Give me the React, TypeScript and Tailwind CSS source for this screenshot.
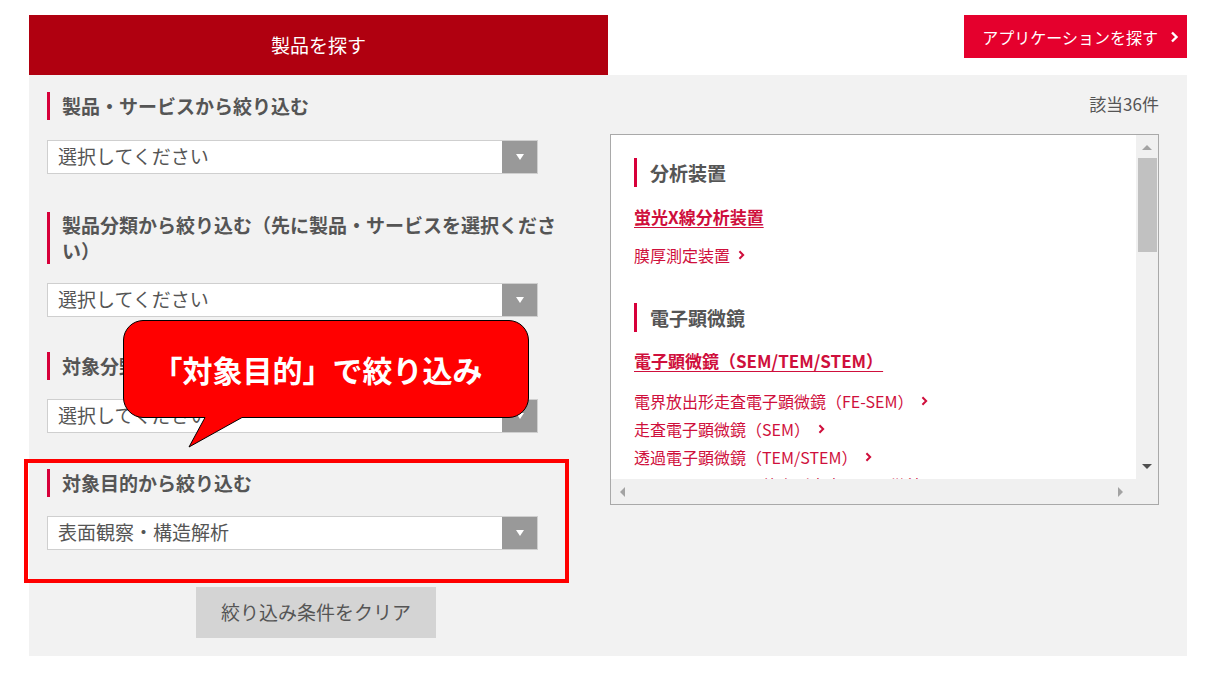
import React from 'react';

const FONT = { fontFamily: '"Noto Sans CJK JP", "Noto Sans", sans-serif' };

const Chevron = ({ className = '' }: { className?: string }) => (
  <svg viewBox="0 0 8 12" className={className} fill="none" stroke="currentColor" strokeWidth={2.4}>
    <path d="M1.5 1.5 L6 6 L1.5 10.5" />
  </svg>
);

const Label: React.FC<{ children: React.ReactNode; className?: string }> = ({ children, className = '' }) => (
  <div className={`border-l-[3px] border-[#d7003a] pl-3 text-[19px] font-bold text-[#555] ${className}`}>
    {children}
  </div>
);

const Select: React.FC<{ value: string; className?: string }> = ({ value, className = '' }) => (
  <div className={`flex h-[34px] w-[491px] items-stretch border border-[#cfcfcf] bg-white ${className}`}>
    <div className="flex-1 pl-[10px] text-[19px] leading-[30px] text-[#555]">{value}</div>
    <div className="flex w-[35px] items-center justify-center bg-[#999]">
      <span className="h-0 w-0 border-x-[4px] border-t-[6px] border-x-transparent border-t-white" />
    </div>
  </div>
);

const ResultList = () => (
  <div className="mt-[18px] flex h-[371px] w-[549px] flex-col border border-[#a9a9a9] bg-white">
    <div className="flex min-h-0 flex-1">
      <div className="flex-1 overflow-hidden pl-[23px] pt-[23px]">
        <div className="border-l-[3px] border-[#d7003a] pl-[13px] text-[19px] font-bold leading-[29px] text-[#555]">
          分析装置
        </div>
        <div className="mt-[18px] text-[17px] font-bold leading-[24px] text-[#cf0f3c] underline underline-offset-[3px]">
          蛍光X線分析装置
        </div>
        <div className="mt-[14px] flex items-center gap-2 text-[16px] leading-[24px] text-[#cf0f3c]">
          膜厚測定装置 <Chevron className="h-[10px] w-[7px]" />
        </div>
        <div className="mt-[36px] border-l-[3px] border-[#d7003a] pl-[13px] text-[19px] font-bold leading-[29px] text-[#555]">
          電子顕微鏡
        </div>
        <div className="mt-[17px] text-[17px] font-bold leading-[24px] text-[#cf0f3c] underline underline-offset-[3px]">
          電子顕微鏡（SEM/TEM/STEM）
        </div>
        <div className="mt-[14px] text-[16px] leading-[28px] text-[#cf0f3c]">
          {[
            '電界放出形走査電子顕微鏡（FE-SEM）',
            '走査電子顕微鏡（SEM）',
            '透過電子顕微鏡（TEM/STEM）',
            'ショットキー電界放出形走査電子顕微鏡',
          ].map((t) => (
            <div key={t} className="flex items-center gap-2 whitespace-nowrap">
              {t} <Chevron className="h-[10px] w-[7px]" />
            </div>
          ))}
        </div>
      </div>
      <div className="flex w-[22px] flex-col items-center bg-[#f0f0f0]">
        <span className="mt-[10px] h-0 w-0 border-x-[5px] border-b-[5px] border-x-transparent border-b-[#a3a3a3]" />
        <div className="mt-[8px] h-[94px] w-[19px] bg-[#c1c1c1]" />
        <div className="flex-1" />
        <span className="mb-[10px] h-0 w-0 border-x-[5px] border-t-[5px] border-x-transparent border-t-[#505050]" />
      </div>
    </div>
    <div className="flex h-[25px] items-center justify-between bg-[#f0f0f0] pl-[9px] pr-[35px]">
      <span className="h-0 w-0 border-y-[5px] border-r-[5px] border-y-transparent border-r-[#a3a3a3]" />
      <span className="h-0 w-0 border-y-[5px] border-l-[5px] border-y-transparent border-l-[#a3a3a3]" />
    </div>
  </div>
);

export default function App() {
  return (
    <div className="relative h-[676px] w-[1216px] bg-white" style={FONT}>
      <div className="ml-[29px] w-[1158px] pt-[15px]">
        <div className="flex items-start justify-between">
          <div className="flex h-[60px] w-[579px] items-center justify-center bg-[#b00010] text-[19px] text-white">
            製品を探す
          </div>
          <div className="flex h-[43px] w-[223px] items-center justify-end gap-[12px] bg-[#e5002d] pr-[8px] text-[16px] text-white">
            アプリケーションを探す
            <Chevron className="h-[12px] w-[9px]" />
          </div>
        </div>

        <div className="flex h-[581px] bg-[#f2f2f2]">
          <div className="w-[581px] pl-[18px] pt-[17px]">
            <div className="w-[525px]">
              <Label className="leading-[28px]">製品・サービスから絞り込む</Label>
              <Select value="選択してください" className="mt-[20px]" />
              <Label className="mt-[38px] leading-[26px]">製品分類から絞り込む（先に製品・サービスを選択ください）</Label>
              <Select value="選択してください" className="mt-[19px]" />
              <Label className="mt-[35px] leading-[28px]">対象分野から絞り込む</Label>
              <Select value="選択してください" className="mt-[19px]" />
              <Label className="mt-[36px] leading-[28px]">対象目的から絞り込む</Label>
              <Select value="表面観察・構造解析" className="mt-[19px]" />
            </div>
            <button className="ml-[149px] mt-[37px] h-[51px] w-[240px] bg-[#d4d4d4] text-[19px] text-[#555]">
              絞り込み条件をクリア
            </button>
          </div>

          <div className="w-[549px] pt-[17px]">
            <div className="text-right text-[17px] leading-[24px] text-[#555]">該当36件</div>
            <ResultList />
          </div>
        </div>
      </div>

      {/* annotation: highlight box */}
      <div className="absolute left-[24px] top-[459px] h-[124px] w-[545px] border-4 border-[#ff0000]" />

      {/* annotation: callout */}
      <div className="absolute left-[123px] top-[320px] h-[130px] w-[407px]">
        <svg width="407" height="130" viewBox="0 0 407 130" className="absolute inset-0">
          <path
            d="M20 0.5 H386 A20 20 0 0 1 405.5 20 V78 A20 20 0 0 1 386 97.5 H119 L66 127 L82 97.5 H20 A20 20 0 0 1 0.5 78 V20 A20 20 0 0 1 20 0.5 Z"
            fill="#ff0000"
            stroke="#000"
            strokeWidth="1"
          />
        </svg>
        <div className="relative flex h-[98px] items-center justify-center pr-[18px] text-[30px] font-bold text-white">
          「対象目的」で絞り込み
        </div>
      </div>
    </div>
  );
}
